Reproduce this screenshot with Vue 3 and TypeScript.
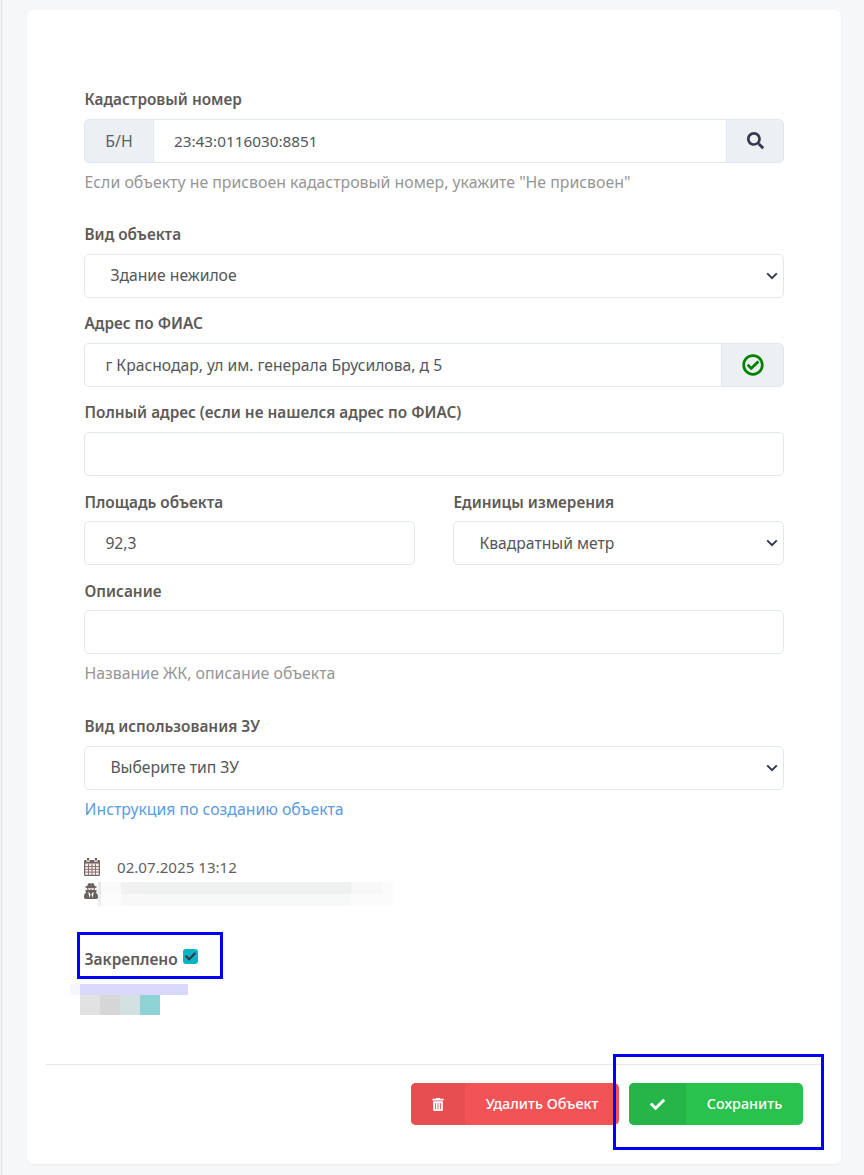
<script setup lang="ts">
const f1 = '23:43:0116030:8851'
const addr = 'г Краснодар, ул им. генерала Брусилова, д 5'
</script>

<template>
  <div class="page">
    <main class="card">
      <form class="form" @submit.prevent>
        <label class="lbl">Кадастровый номер</label>
        <div class="group">
          <span class="addon pre">Б/Н</span>
          <input class="ctl mid digits" :value="f1" />
          <span class="addon post search">
            <svg width="17" height="17" viewBox="0 0 512 512"><path fill="#343a4d" d="M505 442.7L405.3 343c-4.5-4.5-10.6-7-17-7H372c27.6-35.3 44-79.7 44-128C416 93.1 322.9 0 208 0S0 93.1 0 208s93.1 208 208 208c48.3 0 92.7-16.4 128-44v16.3c0 6.4 2.5 12.5 7 17l99.7 99.7c9.4 9.4 24.6 9.4 33.9 0l28.3-28.3c9.4-9.4 9.4-24.6.1-34zM208 336c-70.7 0-128-57.2-128-128 0-70.7 57.2-128 128-128 70.7 0 128 57.2 128 128 0 70.7-57.2 128-128 128z"/></svg>
          </span>
        </div>
        <p class="help h1">Если объекту не присвоен кадастровый номер, укажите "Не присвоен"</p>

        <label class="lbl l2">Вид объекта</label>
        <select class="ctl sel"><option>Здание нежилое</option></select>

        <label class="lbl l3">Адрес по ФИАС</label>
        <div class="group">
          <input class="ctl first" :value="addr" />
          <span class="addon post ok">
            <svg width="22" height="22" viewBox="0 0 512 512"><path fill="#008000" d="M256 8C119.033 8 8 119.033 8 256s111.033 248 248 248 248-111.033 248-248S392.967 8 256 8zm0 64c101.600 0 184 82.400 184 184s-82.400 184-184 184S72 357.600 72 256 154.400 72 256 72zm140.204 114.267l-28-28c-4.667-4.705-12.265-4.736-16.970-.068L215.346 288l-54-54c-4.667-4.705-12.265-4.736-16.970-.069l-28 28c-4.705 4.667-4.736 12.265-.068 16.971l90.781 91.516c4.667 4.705 12.265 4.736 16.970.068l172.589-167.204c4.704-4.668 4.734-12.266.067-16.971z"/></svg>
          </span>
        </div>

        <label class="lbl l3">Полный адрес (если не нашелся адрес по ФИАС)</label>
        <input class="ctl" />

        <div class="two">
          <div>
            <label class="lbl">Площадь объекта</label>
            <input class="ctl" value="92,3" />
          </div>
          <div>
            <label class="lbl">Единицы измерения</label>
            <select class="ctl sel"><option>Квадратный метр</option></select>
          </div>
        </div>

        <label class="lbl l3 after-two">Описание</label>
        <input class="ctl" />
        <p class="help h2">Название ЖК, описание объекта</p>

        <label class="lbl l4">Вид использования ЗУ</label>
        <select class="ctl sel"><option>Выберите тип ЗУ</option></select>
        <a class="link" href="#">Инструкция по созданию объекта</a>

        <div class="meta">
          <svg class="mi" width="16" height="18" viewBox="0 0 16 18">
            <path fill="#6c625e" d="M3 0h2.200v2.400H3zM10.800 0H13v2.400h-2.200zM1.300 2H2.500v1.800h3.200V2h4.600v1.800h3.200V2h1.200C15.400 2 16 2.600 16 3.300v13.400c0 .7-.6 1.300-1.300 1.300H1.300C.6 18 0 17.400 0 16.700V3.300C0 2.600.6 2 1.300 2z"/>
            <rect x="1.200" y="5.500" width="13.600" height="11.300" fill="#f3eeee"/>
            <path fill="none" stroke="#8a6f6c" stroke-width="1" d="M1.200 8.500h13.600M1.200 11.300h13.600M1.200 14.100h13.600M4.500 5.500v11.300M8 5.500v11.300M11.500 5.500v11.300"/>
          </svg>
          <span class="date">02.07.2025 13:12</span>
        </div>
        <div class="meta spy">
          <svg class="mi" width="14" height="16" viewBox="0 0 448 512"><path fill="#6c625e" d="M383.900 308.300l23.900-62.600c4-10.500-3.700-21.700-15-21.700h-58.500c11-18.900 17.800-40.600 17.800-64v-.3c39.200-7.800 64-19.100 64-31.700 0-13.300-27.300-25.100-70.100-33-9.200-32.800-27-65.800-40.600-82.800-9.500-11.900-25.900-15.600-39.500-8.800l-27.600 13.800c-9 4.500-19.600 4.500-28.600 0L182.100 3.400c-13.600-6.800-30-3.100-39.500 8.800-13.500 17-31.400 50-40.600 82.800-42.700 7.900-70 19.700-70 33 0 12.600 24.800 23.900 64 31.700v.3c0 23.400 6.800 45.100 17.800 64H56.300c-11.500 0-19.200 11.700-14.700 22.300l25.800 60.200C27.300 329.800 0 372.700 0 422.400v44.800C0 491.900 20.100 512 44.800 512h358.400c24.700 0 44.800-20.100 44.800-44.800v-44.800c0-48.400-25.800-90.400-64.100-114.100zM176 480l-41.600-192 49.600 32 24 40-32 120zm96 0l-32-120 24-40 49.600-32L272 480zm41.700-298.500c-3.900 11.900-7 24.600-16.500 33.400-10.100 9.300-48 22.400-64-25-2.800-8.400-15.400-8.400-18.300 0-17 50.200-56 32.400-64 25-9.500-8.800-12.700-21.500-16.500-33.400-.8-2.500-6.300-5.700-6.300-5.800v-10.800c28.300 3.600 61 5.800 96 5.800s67.700-2.100 96-5.800v10.800c-.1.100-5.600 3.200-6.400 5.800z"/></svg>
          <span class="blur"></span>
        </div>

        <div class="pin">
          <label class="lbl pinl">Закреплено</label>
          <span class="cb">
            <svg width="11" height="11" viewBox="0 0 512 512"><path fill="#343a40" d="M173.898 439.404l-166.400-166.400c-9.997-9.997-9.997-26.206 0-36.204l36.203-36.204c9.997-9.998 26.207-9.998 36.204 0L192 312.690 432.095 72.596c9.997-9.997 26.207-9.997 36.204 0l36.203 36.204c9.997 9.997 9.997 26.206 0 36.204l-294.400 294.401c-9.998 9.997-26.207 9.997-36.204-.001z"/></svg>
          </span>
          <span class="mark mark1"></span>
        </div>
        <div class="redact">
          <div class="r1"></div>
          <div class="r2"><i class="c1"></i><i class="c2"></i><i class="c3"></i><i class="c4"></i></div>
        </div>
      </form>

      <footer class="foot">
        <button type="button" class="btn del">
          <span class="ic">
            <svg width="12" height="13" viewBox="0 0 448 512"><path fill="#fff" d="M32 464a48 48 0 0 0 48 48h288a48 48 0 0 0 48-48V128H32zm272-256a16 16 0 0 1 32 0v224a16 16 0 0 1-32 0zm-96 0a16 16 0 0 1 32 0v224a16 16 0 0 1-32 0zm-96 0a16 16 0 0 1 32 0v224a16 16 0 0 1-32 0zM432 32H312l-9.400-18.700A24 24 0 0 0 281.100 0H166.800a23.720 23.720 0 0 0-21.400 13.300L136 32H16A16 16 0 0 0 0 48v32a16 16 0 0 0 16 16h416a16 16 0 0 0 16-16V48a16 16 0 0 0-16-16z"/></svg>
          </span>
          <span class="tx">Удалить Объект</span>
        </button>
        <button type="button" class="btn save">
          <span class="ic">
            <svg width="15" height="15" viewBox="0 0 512 512"><path fill="#fff" d="M173.898 439.404l-166.400-166.400c-9.997-9.997-9.997-26.206 0-36.204l36.203-36.204c9.997-9.998 26.207-9.998 36.204 0L192 312.690 432.095 72.596c9.997-9.997 26.207-9.997 36.204 0l36.203 36.204c9.997 9.997 9.997 26.206 0 36.204l-294.400 294.401c-9.998 9.997-26.207 9.997-36.204-.001z"/></svg>
          </span>
          <span class="tx">Сохранить</span>
        </button>
        <span class="mark mark2"></span>
      </footer>
    </main>
  </div>
</template>

<style>
html, body { background: #f5f7f9; }
</style>

<style scoped>
.page {
  box-sizing: border-box;
  width: 863px;
  height: 1175px;
  overflow: hidden;
  margin-left: 1px;
  padding: 10px 23px 0 25px;
  border-left: 1px solid #dfe3e7;
  background: #f5f7f9;
  font-family: "Noto Sans", "Open Sans", sans-serif;
  font-size: 15.800px;
  line-height: 22.500px;
  color: #5f5f5f;
}
.card {
  box-sizing: border-box;
  height: 1154px;
  background: #fff;
  border-radius: 6px;
  box-shadow: 0 1px 2px rgba(0, 0, 0, 0.05);
  display: flex;
  flex-direction: column;
}
.form { padding: 78.300px 57px 0; flex: 1; }
.lbl {
  display: block;
  padding-left: 0.500px;
  font-weight: 600;
  font-size: 15.350px;
  color: #5e5a58;
  margin-bottom: 8px;
  line-height: 22.500px;
}
.l2 { margin-top: 29.900px; }
.l3 { margin-top: 14.600px; }
.l3.after-two { margin-top: 14.100px; }
.l4 { margin-top: 30.600px; }
.ctl {
  box-sizing: border-box;
  display: block;
  width: 100%;
  height: 44px;
  padding: 0 20.400px;
  border: 1px solid #e1e8ec;
  border-radius: 5px;
  background: #fff;
  font: inherit;
  font-size: 15.700px;
  color: #55555a;
  outline: none;
}
.digits { font-size: 15.300px; padding-left: 20px; }
.sel {
  appearance: none;
  padding-left: 25.400px;
  background: #fff url("data:image/svg+xml,%3Csvg xmlns='http://www.w3.org/2000/svg' width='12' height='8' viewBox='0 0 12 8'%3E%3Cpath d='M1.200 1.400 6 6.200l4.800-4.800' fill='none' stroke='%23343a4d' stroke-width='2'/%3E%3C/svg%3E") no-repeat right 5px center;
}
.group { display: flex; height: 44px; }
.group .ctl { flex: 1; min-width: 0; }
.mid { border-radius: 0; border-left: 0; border-right: 0; }
.first { border-radius: 5px 0 0 5px; border-right: 0; }
.addon {
  box-sizing: border-box;
  display: flex;
  align-items: center;
  justify-content: center;
  background: #edf0f3;
  border: 1px solid #e1e8ec;
  color: #5b6068;
}
.pre { width: 70px; border-radius: 5px 0 0 5px; }
.post { border-radius: 0 5px 5px 0; }
.search { width: 58px; }
.ok { width: 63px; }
.help { margin: 0; padding-left: 0.500px; color: #969696; font-size: 15.850px; }
.h1 { margin-top: 8px; }
.h2 { margin-top: 8px; }
.two {
  display: grid;
  grid-template-columns: 331px 331px;
  column-gap: 38px;
  margin-top: 15.100px;
}
.link {
  display: block;
  margin-top: 7.900px;
  padding-left: 0.500px;
  color: #5b9be0;
  text-decoration: none;
}
.meta { display: flex; align-items: center; height: 22px; }
.link + .meta { margin-top: 36px; }
.mi { flex: none; margin-right: 17px; }
.date { color: #5f5f5f; font-size: 15.130px; }
.spy { margin-top: 2px; }
.spy .mi { margin-right: 0; }
.blur {
  align-self: flex-start;
  margin-top: 2px;
  width: 295px;
  height: 24px;
  background:
    linear-gradient(90deg, #e8e8e8 0 3px, #fafafa 3px 23px, #f1f1f1 23px 43px, #eff0f0 43px 253px, #f7f7f7 253px 283px, #fbfbfb 283px 295px) top / 100% 12px no-repeat,
    linear-gradient(90deg, #eeeeee 0 3px, #fcfcfc 3px 23px, #f8f8f8 23px 63px, #f7f8f8 63px 253px, #fbfbfb 253px 295px) bottom / 100% 12px no-repeat;
}
.pin { position: relative; display: flex; align-items: flex-start; margin-top: 42px; height: 40px; }
.pinl { font-size: 15.500px; margin: 4px 0 0; }
.cb {
  box-sizing: border-box;
  width: 15px;
  height: 15px;
  margin: 5px 0 0 5px;
  border-radius: 3px;
  background: #08b5c4;
  display: flex;
  align-items: center;
  justify-content: center;
}
.mark { position: absolute; box-sizing: border-box; border: 3px solid #0000f5; }
.mark1 { left: -7px; top: -12px; width: 146px; height: 47px; }
.redact { margin: 0 0 0 -4px; }
.r1 { width: 108px; height: 11px; background: #d8d8fc; box-shadow: -10px 0 0 #f6f6fe; }
.r2 { display: flex; }
.r2 i { width: 20px; height: 20px; }
.c1 { background: #e2e2e2; }
.c2 { background: #d6d6d6; }
.c3 { background: #d3e0e1; }
.c4 { background: #8dd3d6; }
.foot {
  position: relative;
  display: flex;
  justify-content: flex-end;
  gap: 10px;
  margin: 0 19px;
  padding: 18px 19px 39px 0;
  border-top: 1px solid #e6e7e9;
}
.btn {
  display: flex;
  align-items: stretch;
  height: 42px;
  padding: 0;
  border: 0;
  border-radius: 5px;
  overflow: hidden;
  font: inherit;
  font-weight: 500;
  font-size: 14.400px;
  color: #fff;
}
.ic { display: flex; align-items: center; justify-content: center; }
.tx { display: flex; align-items: center; justify-content: center; flex: 1; }
.del { width: 208px; background: #f25357; }
.del .ic { width: 54px; background: #e64e52; }
.save { width: 174px; background: #29c24d; }
.save .ic { width: 57px; background: #26b548; }
.mark2 { right: -2px; top: -11px; width: 211px; height: 96px; }
</style>
